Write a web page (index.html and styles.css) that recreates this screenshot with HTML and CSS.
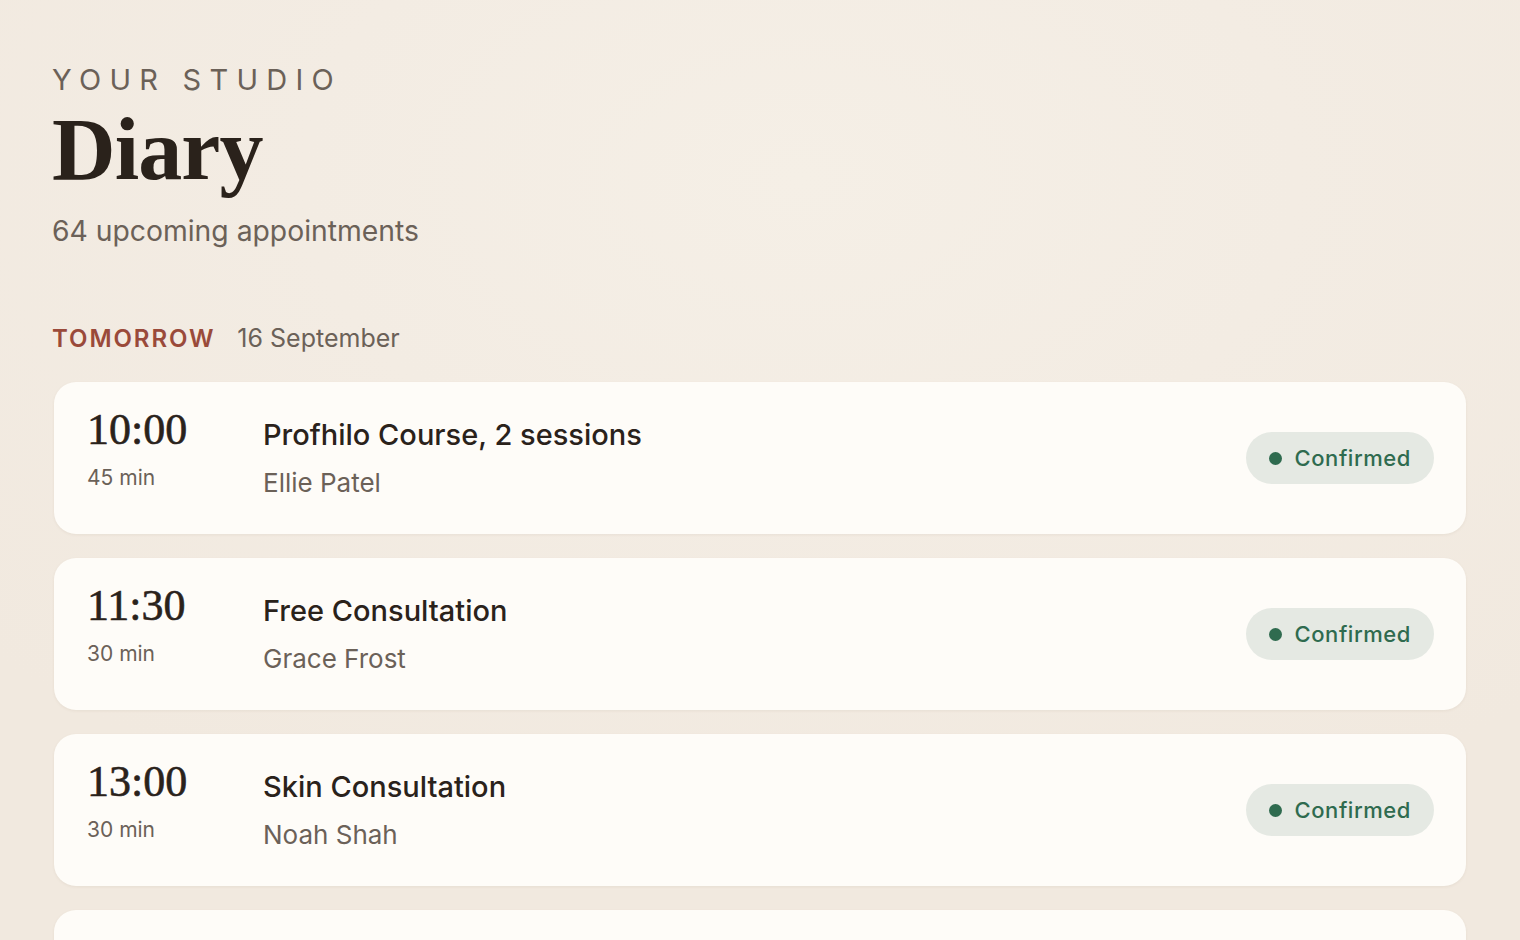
FILE: index.html
```html
<!DOCTYPE html>
<html lang="en">
<head>
<meta charset="utf-8">
<title>Diary</title>
<link rel="stylesheet" href="styles.css">
</head>
<body>
<main class="page">
  <header class="head">
    <div class="eyebrow">YOUR STUDIO</div>
    <h1 class="title">Diary</h1>
    <p class="sub">64 upcoming appointments</p>
  </header>
  <section class="day">
    <div class="day-head"><span class="day-tag">TOMORROW</span><span class="day-date">16 September</span></div>
    <ul class="list">
      <li class="card">
        <div class="when"><div class="time">10:00</div><div class="dur">45 min</div></div>
        <div class="what"><div class="name">Profhilo Course, 2 sessions</div><div class="client">Ellie Patel</div></div>
        <span class="badge"><span class="dot"></span>Confirmed</span>
      </li>
      <li class="card">
        <div class="when"><div class="time">11:30</div><div class="dur">30 min</div></div>
        <div class="what"><div class="name">Free Consultation</div><div class="client">Grace Frost</div></div>
        <span class="badge"><span class="dot"></span>Confirmed</span>
      </li>
      <li class="card">
        <div class="when"><div class="time">13:00</div><div class="dur">30 min</div></div>
        <div class="what"><div class="name">Skin Consultation</div><div class="client">Noah Shah</div></div>
        <span class="badge"><span class="dot"></span>Confirmed</span>
      </li>
      <li class="card">
        <div class="when"><div class="time">14:30</div><div class="dur">60 min</div></div>
        <div class="what"><div class="name">Lip Filler</div><div class="client">Maya Reid</div></div>
        <span class="badge"><span class="dot"></span>Confirmed</span>
      </li>
    </ul>
  </section>
</main>
</body>
</html>
```
FILE: styles.css
```css
* { box-sizing: border-box; }
html, body { margin: 0; padding: 0; height: 100%; overflow: hidden; }
body {
  background: radial-gradient(ellipse 1100px 700px at 800px 180px, #f5efe6 0%, #f3ece3 45%, #f1e9df 100%);
  font-family: Inter, "Noto Sans", sans-serif;
  color: #2a221b;
}
.page { padding: 60px 54px 0 52px; }
.head { display: flex; flex-direction: column; }
.eyebrow {
  font-size: 29px; letter-spacing: 0.285em; color: #6b6158; font-weight: 400; line-height: 40px;
}
.title {
  margin: 0; font-family: "Liberation Serif", "DejaVu Serif", serif; font-weight: 700;
  font-size: 88px; line-height: 100px; color: #2a221b; letter-spacing: -0.01em;
}
.sub { margin: 11px 0 0; font-size: 28.3px; line-height: 40px; color: #6b6158; }
.day { margin-top: 69px; }
.day-head { display: flex; align-items: baseline; gap: 22px; line-height: 36px; }
.day-tag { font-size: 24px; font-weight: 600; letter-spacing: 0.08em; color: #9a4a3a; }
.day-date { font-size: 25px; color: #6b6158; }
.list { list-style: none; margin: 25px 0 0 2px; padding: 0; display: flex; flex-direction: column; gap: 24px; }
.card {
  display: flex; align-items: center; height: 152px; padding: 0 32px 0 33px;
  background: #fefcf8; border-radius: 22px;
  box-shadow: 0 1px 3px rgba(120,95,60,0.08);
}
.when { width: 176px; flex: none; margin-top: -15px; }
.time {
  font-family: "Liberation Serif", "DejaVu Serif", serif; font-size: 44px; line-height: 44px; color: #2a221b;
  -webkit-text-stroke: 0.6px #2a221b;
}
.dur { font-size: 21px; line-height: 30px; color: #6b6158; margin-top: 11px; }
.what { flex: 1; }
.name { font-size: 29px; font-weight: 500; line-height: 40px; color: #2a221b; }
.client { font-size: 26px; line-height: 36px; color: #6b6158; margin-top: 10px; }
.badge {
  display: inline-flex; align-items: center; gap: 13px; height: 52px; padding: 0 23px 0 23px;
  border-radius: 26px; background: #e5e9e3; color: #2f6b4f; font-size: 22px; font-weight: 500; letter-spacing: 0.025em;
}
.dot { width: 13px; height: 13px; border-radius: 50%; background: #2f6b4f; }
```
